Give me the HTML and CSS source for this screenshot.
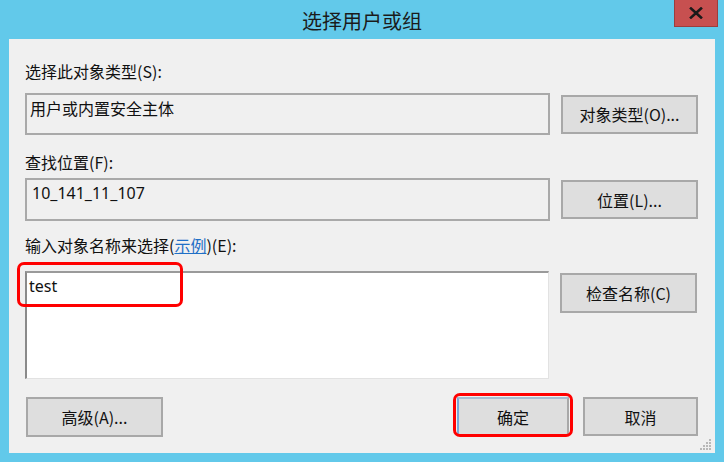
FILE: index.html
```html
<!DOCTYPE html>
<html lang="zh-CN">
<head>
<meta charset="utf-8">
<title>选择用户或组</title>
<link rel="stylesheet" href="styles.css">
</head>
<body>
<div class="window">
  <div class="titlebar">
    <span class="title">选择用户或组</span>
    <button class="close" type="button" aria-label="关闭">
      <svg width="14" height="12" viewBox="0 0 14 12"><path d="M2 1.5 L12 10.5 M12 1.5 L2 10.5" stroke="#1a1a1a" stroke-width="2.6" stroke-linecap="square"/></svg>
    </button>
  </div>
  <div class="client">
    <div class="label l1">选择此对象类型(<u>S</u>):</div>
    <div class="row r1">
      <div class="field">用户或内置安全主体</div>
      <button class="btn" type="button">对象类型(<u>O</u>)...</button>
    </div>
    <div class="label l2">查找位置(<u>F</u>):</div>
    <div class="row r2">
      <div class="field">10_141_11_107</div>
      <button class="btn" type="button">位置(<u>L</u>)...</button>
    </div>
    <div class="label l3">输入对象名称来选择(<a class="link" href="#">示例</a>)(<u>E</u>):</div>
    <div class="row r3">
      <div class="area-wrap">
        <div class="area">test</div>
        <div class="mark mark-area"></div>
      </div>
      <button class="btn btn-check" type="button">检查名称(<u>C</u>)</button>
    </div>
    <div class="bottom">
      <button class="btn btn-adv" type="button">高级(<u>A</u>)...</button>
      <div class="actions">
        <div class="ok-wrap">
          <button class="btn btn-ok" type="button">确定</button>
          <div class="mark mark-ok"></div>
        </div>
        <button class="btn btn-cancel" type="button">取消</button>
      </div>
    </div>
    <div class="grip">
      <svg width="12" height="12" viewBox="0 0 12 12" fill="#b8b8b8">
        <rect x="9" y="1" width="2" height="2"/>
        <rect x="6" y="4" width="2" height="2"/><rect x="9" y="4" width="2" height="2"/>
        <rect x="3" y="7" width="2" height="2"/><rect x="6" y="7" width="2" height="2"/><rect x="9" y="7" width="2" height="2"/>
        <rect x="0" y="10" width="2" height="2"/><rect x="3" y="10" width="2" height="2"/><rect x="6" y="10" width="2" height="2"/><rect x="9" y="10" width="2" height="2"/>
      </svg>
    </div>
  </div>
</div>
</body>
</html>
```

FILE: styles.css
```css
* { box-sizing: border-box; }
html, body { margin: 0; padding: 0; }
body {
  width: 724px;
  height: 462px;
  background: #62c9ea;
  font-family: "Noto Sans", "Noto Sans CJK SC", sans-serif;
  font-size: 16px;
  color: #111;
  overflow: hidden;
}
u { text-decoration: none; }
.window { width: 724px; height: 462px; }
.titlebar {
  position: relative;
  height: 39px;
  display: flex;
  justify-content: center;
  align-items: center;
}
.title {
  font-family: "Noto Sans CJK SC", sans-serif;
  font-size: 20px;
  color: #1b1b1b;
  margin-top: 2px;
}
.close {
  position: absolute;
  left: 674px;
  top: -1px;
  width: 44px;
  height: 28px;
  background: #c75050;
  border: 1px solid #9c3d3d;
  border-top: none;
  padding: 0;
  display: flex;
  align-items: center;
  justify-content: center;
}
.client {
  position: relative;
  margin: 0 9px;
  width: 706px;
  height: 414px;
  background: #f0f0f0;
  padding: 22px 17px 0 16px;
}
.label {
  height: 20px;
  line-height: 20px;
  font-family: "Noto Sans CJK SC", sans-serif;
  white-space: nowrap;
}
.row {
  display: flex;
  align-items: center;
  gap: 11px;
}
.r1 { margin-top: 12px; height: 42px; }
.l2 { margin-top: 17px; }
.r2 { margin-top: 6px; height: 43px; }
.l3 { margin-top: 14px; }
.r3 { margin-top: 16px; align-items: flex-start; }
.field {
  width: 525px;
  height: 100%;
  border: 2px solid #a9a9a9;
  background: #f0f0f0;
  padding: 2px 0 0 3px;
  line-height: 22px;
  font-family: "Noto Sans CJK SC", sans-serif;
}
.r2 .field { font-family: "Noto Sans", sans-serif; padding-top: 2px; padding-left: 5px; }
.btn {
  width: 137px;
  height: 39px;
  background: #dedede;
  border: 2px solid #a8a8a8;
  font-family: "Noto Sans CJK SC", sans-serif;
  font-size: 16px;
  color: #111;
  padding: 0;
  margin: 0;
}
.link { color: #1f6fc6; text-decoration: underline; }
.area-wrap { position: relative; }
.area {
  width: 524px;
  height: 108px;
  background: #fff;
  border-top: 2px solid #9a9a9a;
  border-left: 2px solid #8a8a8a;
  border-right: 1px solid #e2e2e2;
  border-bottom: 1px solid #e2e2e2;
  padding: 3px 0 0 2px;
  line-height: 20px;
  font-family: "Noto Sans", sans-serif;
}
.btn-check { margin-top: 2px; height: 40px; }
.mark {
  position: absolute;
  border: 3px solid #ff0000;
  border-radius: 7px;
  pointer-events: none;
}
.mark-area { left: -8px; top: -9px; width: 166px; height: 45px; }
.bottom {
  margin-top: 18px;
  display: flex;
  justify-content: space-between;
  align-items: flex-start;
}
.btn-adv { width: 137px; height: 40px; margin-left: 1px; }
.actions { display: flex; gap: 14px; }
.ok-wrap { position: relative; }
.btn-ok {
  width: 112px;
  height: 39px;
  border-left-color: #7aa8d8;
  border-top-color: #a8bcd0;
}
.mark-ok { left: -4px; top: -4px; width: 120px; height: 44px; }
.btn-cancel { width: 115px; height: 39px; }
.grip {
  position: absolute;
  right: 3px;
  bottom: 3px;
  width: 12px;
  height: 12px;
  display: flex;
}
```
